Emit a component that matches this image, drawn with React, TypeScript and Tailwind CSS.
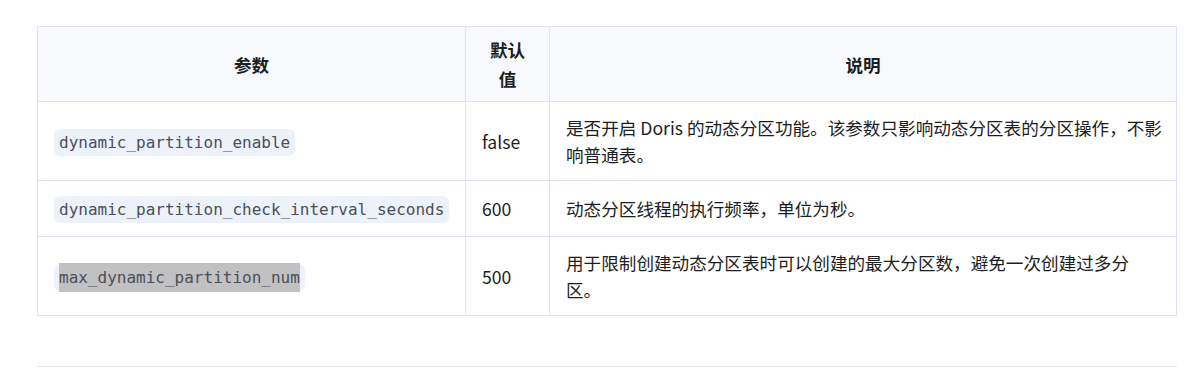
import React from "react";

type Row = {
  name: string;
  value: string;
  desc: string;
  selected?: boolean;
};

const rows: Row[] = [
  {
    name: "dynamic_partition_enable",
    value: "false",
    desc: "是否开启 Doris 的动态分区功能。该参数只影响动态分区表的分区操作，不影响普通表。",
  },
  {
    name: "dynamic_partition_check_interval_seconds",
    value: "600",
    desc: "动态分区线程的执行频率，单位为秒。",
  },
  {
    name: "max_dynamic_partition_num",
    value: "500",
    desc: "用于限制创建动态分区表时可以创建的最大分区数，避免一次创建过多分区。",
    selected: true,
  },
];

const cell = "border border-[#dfe5f0] px-4 align-middle";

export default function App() {
  return (
    <div className="min-h-screen bg-white font-['Noto_Sans_CJK_SC',sans-serif] text-[17.6px] text-[#1c1e21]">
      <div className="ml-[37px] w-[1140px] pt-[26px]">
        <table className="w-full table-fixed border-collapse">
          <colgroup>
            <col className="w-[428px]" />
            <col className="w-[84px]" />
            <col />
          </colgroup>
          <thead>
            <tr className="bg-[#f7f9fd]">
              <th className={`${cell} h-[75px] text-center font-bold leading-[29px]`}>参数</th>
              <th className={`${cell} h-[75px] text-center font-bold leading-[29px]`}>
                默认
                <br />值
              </th>
              <th className={`${cell} h-[75px] text-center font-bold leading-[29px]`}>说明</th>
            </tr>
          </thead>
          <tbody>
            {rows.map((r) => (
              <tr key={r.name} className={r.desc.length > 30 ? "h-[79px]" : "h-[56px]"}>
                <td className={cell}>
                  <code className="rounded-md bg-[#edf2fa] px-[5px] py-1 font-['DejaVu_Sans_Mono',monospace] text-[16px] text-[#4a4f59]">
                    {r.selected ? (
                      <span className="bg-[#c1c1c3] py-[5px]">{r.name}</span>
                    ) : (
                      r.name
                    )}
                  </code>
                </td>
                <td className={`${cell} leading-[27px]`}>{r.value}</td>
                <td className={`${cell} !pr-[13px] leading-[27px]`}>{r.desc}</td>
              </tr>
            ))}
          </tbody>
        </table>
        <div className="mt-[50px] border-t border-[#e3e6ec]" />
      </div>
    </div>
  );
}
